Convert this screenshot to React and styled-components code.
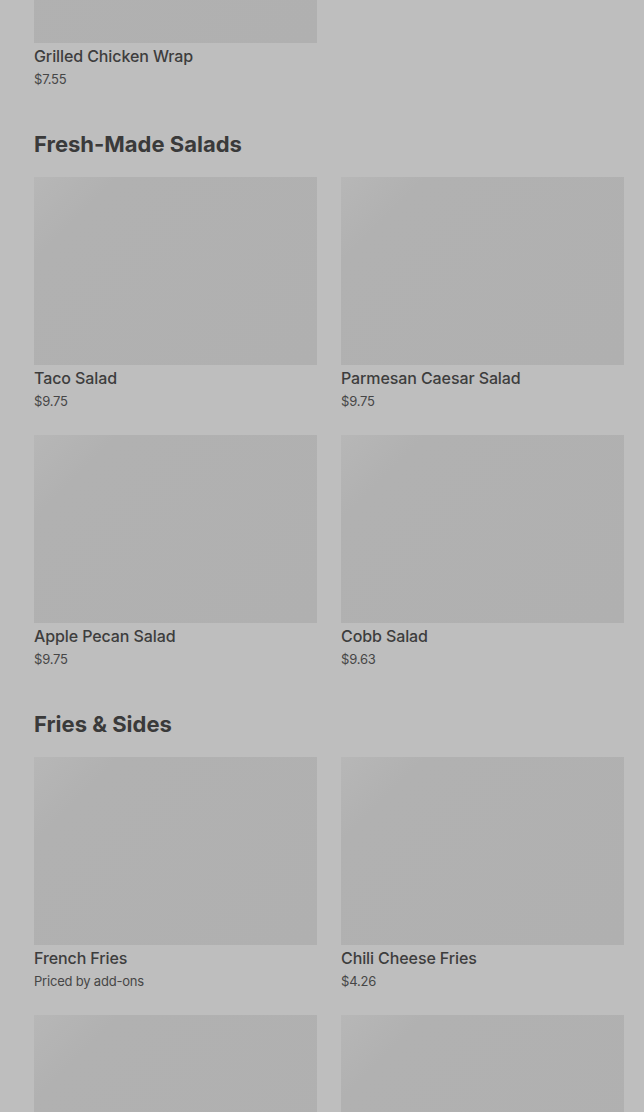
import React from "react";
import styled, { createGlobalStyle } from "styled-components";

const sections = [
  {
    title: null,
    items: [{ id: "wrap", name: "Grilled Chicken Wrap", price: "$7.55" }],
  },
  {
    title: "Fresh-Made Salads",
    items: [
      { id: "taco", name: "Taco Salad", price: "$9.75" },
      { id: "caesar", name: "Parmesan Caesar Salad", price: "$9.75" },
      { id: "pecan", name: "Apple Pecan Salad", price: "$9.75" },
      { id: "cobb", name: "Cobb Salad", price: "$9.63" },
    ],
  },
  {
    title: "Fries & Sides",
    items: [
      { id: "fries", name: "French Fries", price: "Priced by add-ons" },
      { id: "chili", name: "Chili Cheese Fries", price: "$4.26" },
      // below the fold: only the pictures are in view
      { id: "side-1" },
      { id: "side-2" },
    ],
  },
];

const App = () => {
  return (
    <>
      <GlobalStyle />
      <Page>
        {sections.map((section, i) => (
          <Section key={i}>
            {section.title && <SectionTitle>{section.title}</SectionTitle>}
            <Grid>
              {section.items.map((item) => (
                <Card key={item.id}>
                  <Thumb />
                  {item.name && <ItemName>{item.name}</ItemName>}
                  {item.price && <ItemPrice>{item.price}</ItemPrice>}
                </Card>
              ))}
            </Grid>
          </Section>
        ))}
      </Page>
    </>
  );
};

/* Start Styling */
const GlobalStyle = createGlobalStyle`
  html, body {
    margin: 0;
    padding: 0;
    background: #bebebe;
    overflow: hidden;
  }
  body {
    font-family: Inter, "Liberation Sans", sans-serif;
    color: #3b3b3b;
  }
`;
const Page = styled.main`
  /* page is scrolled: first card's picture is cut by the top edge */
  margin-top: -145px;
  padding: 0 20px 0 34px;
  display: flex;
  flex-direction: column;
  gap: 42px;
`;
const Section = styled.section`
  display: flex;
  flex-direction: column;
  gap: 19px;
`;
const SectionTitle = styled.h2`
  margin: 0;
  font-size: 22px;
  line-height: 28px;
  font-weight: 700;
  letter-spacing: 0;
  color: #3a3a3a;
`;
const Grid = styled.div`
  display: grid;
  grid-template-columns: 1fr 1fr;
  column-gap: 24px;
  row-gap: 25px;
`;
const Card = styled.div`
  display: flex;
  flex-direction: column;
`;
const Thumb = styled.div`
  height: 188px;
  margin-bottom: -1px;
  background: linear-gradient(135deg, #b7b7b7 0%, #b1b1b1 18%, #b0b0b0 100%);
`;
const ItemName = styled.div`
  margin-top: 4px;
  font-size: 16px;
  line-height: 20px;
  font-weight: 500;
  letter-spacing: -0.1px;
  color: #3d3d3d;
`;
const ItemPrice = styled.div`
  margin-top: 4px;
  font-size: 13px;
  line-height: 18px;
  font-weight: 400;
  color: #464646;
  letter-spacing: -0.2px;
`;
/* End Styling */

export default App;
